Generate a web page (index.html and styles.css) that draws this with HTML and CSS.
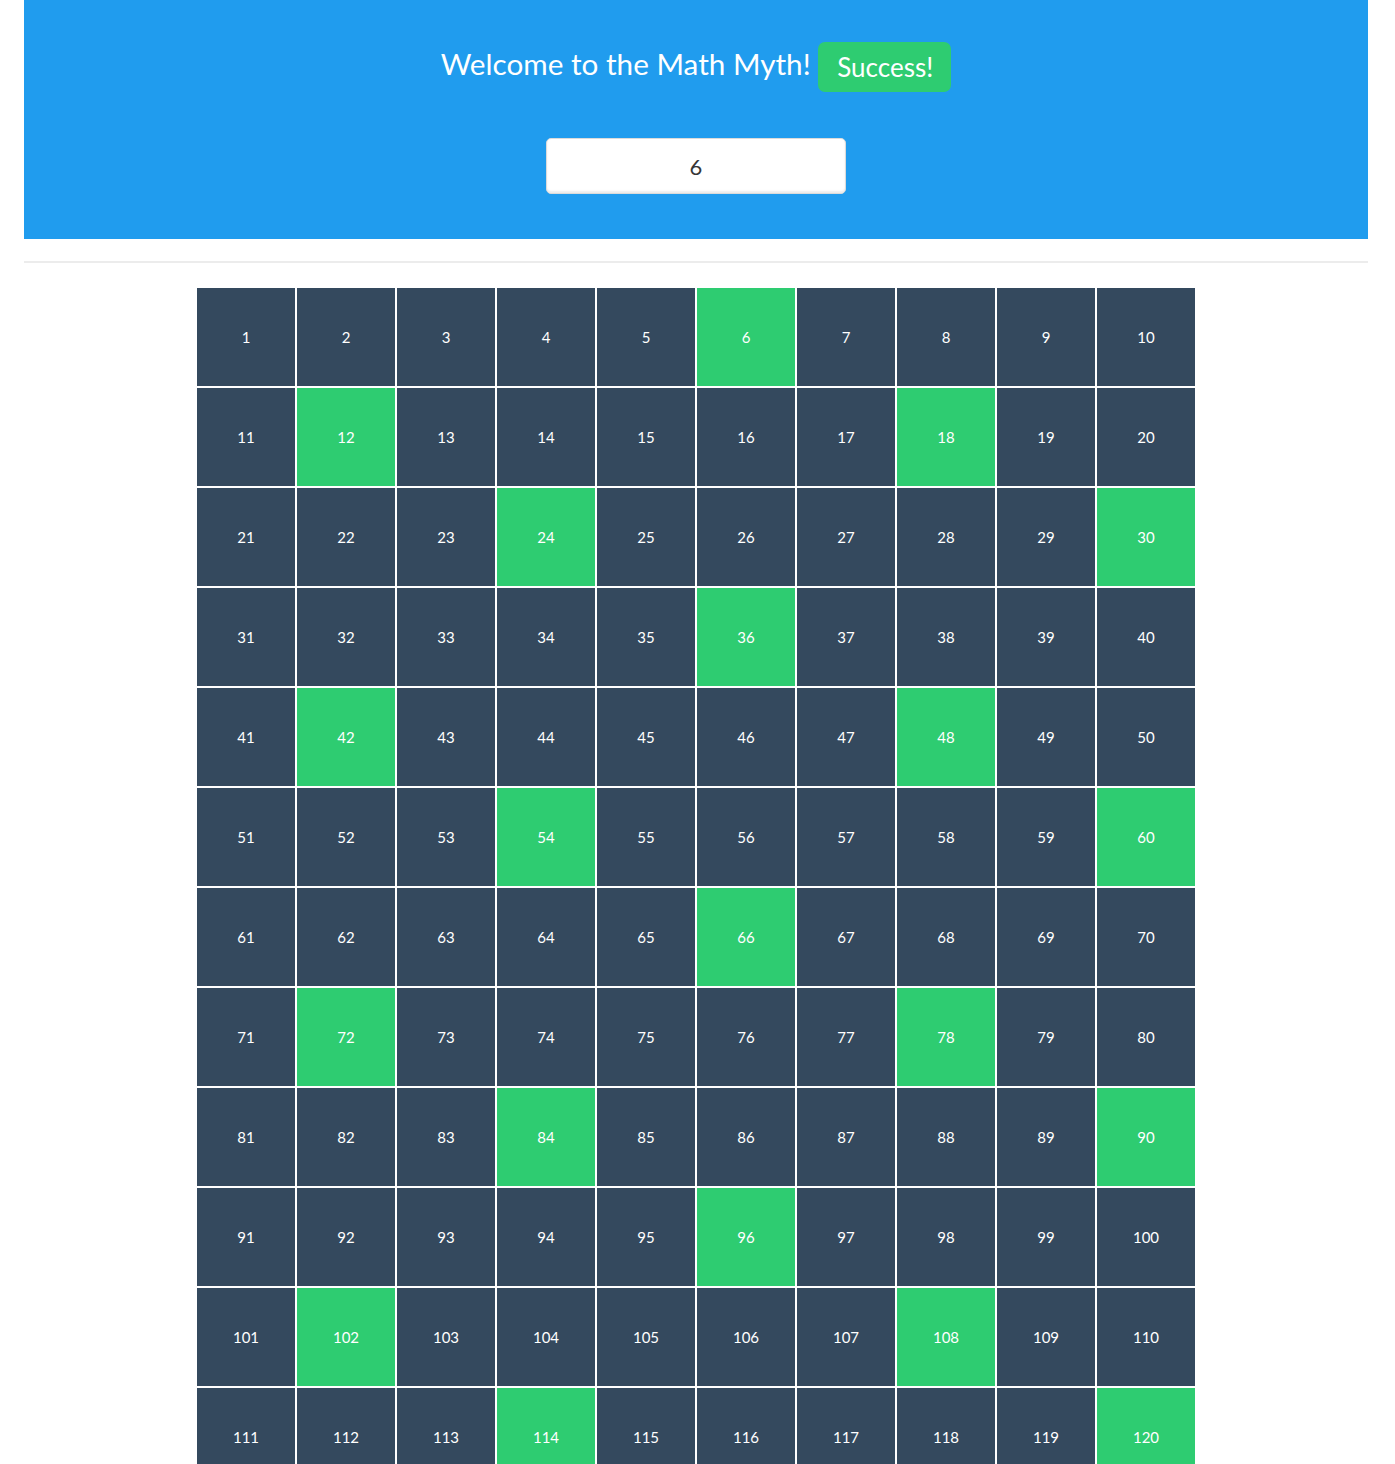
FILE: index.html
```html
<!DOCTYPE html>
<html>
<head>
<meta charset="utf-8">
<link rel="stylesheet" href="styles.css">
</head>
<body>
<div class="container">
  <header class="hero">
    <h1 class="title">Welcome to the Math Myth! <span class="badge">Success!</span></h1>
    <div class="input-wrap"><input class="num-input" type="text" value="6"></div>
  </header>
  <hr class="divider">
  <div class="grid" id="grid"></div>
</div>
<script src="script.js"></script>
</body>
</html>
```
FILE: styles.css
```css
html, body {
  margin: 0;
  padding: 0;
  background: #fff;
  font-family: Lato, "Open Sans", sans-serif;
}
.container {
  padding: 0 27px 0 24px;
}
.hero {
  background: #209cee;
  height: 239px;
  box-sizing: border-box;
  padding-top: 42px;
  text-align: center;
}
.title {
  margin: 0;
  color: #fff;
  font-weight: 400;
  font-size: 29.7px;
  line-height: 40px;
}
.badge {
  display: inline-block;
  background: #2ecc71;
  color: #fff;
  font-size: 26px;
  line-height: 50px;
  padding: 0 18px 0 19px;
  border-radius: 7px;
  vertical-align: -2px;
}
.input-wrap {
  margin-top: 46px;
  line-height: 0;
}
.num-input {
  width: 300px;
  height: 56px;
  box-sizing: border-box;
  border: 1px solid #dbdbdb;
  border-radius: 5px;
  text-align: center;
  font-family: Lato, sans-serif;
  font-size: 22px;
  color: #363636;
  outline: none;
  box-shadow: inset 0 -2px 2px rgba(10,10,10,0.08);
}
.divider {
  margin: 22px 0 24px;
  border: none;
  height: 2px;
  background: #ececec;
}
.grid {
  width: 1000px;
  margin: 0 auto;
  display: grid;
  grid-template-columns: repeat(10, 100px);
}
.cell {
  height: 100px;
  box-sizing: border-box;
  border: 1px solid #fff;
  background: #34495e;
  color: #fff;
  font-size: 15px;
  display: flex;
  align-items: center;
  justify-content: center;
}
.cell.hit {
  background: #2ecc71;
}
```
FILE: script.js
```js
var g = document.getElementById('grid');
var n = 6;
for (var i = 1; i <= 120; i++) {
  var d = document.createElement('div');
  d.className = 'cell' + (i % n === 0 ? ' hit' : '');
  d.textContent = i;
  g.appendChild(d);
}
```
